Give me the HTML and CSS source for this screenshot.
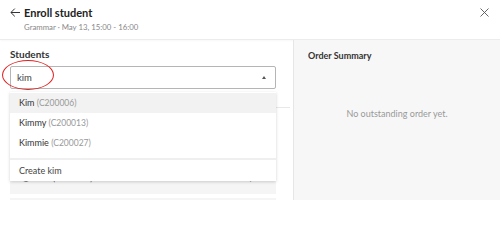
FILE: index.html
```html
<!DOCTYPE html>
<html>
<head>
<meta charset="utf-8">
<link rel="stylesheet" href="styles.css">
</head>
<body>
<div class="header">
  <svg class="back" width="10" height="9" viewBox="0 0 10 9"><path d="M10 4.5H1M4.8 0.6L0.9 4.5L4.8 8.4" fill="none" stroke="#333" stroke-width="1"/></svg>
  <div class="titles">
    <div class="title">Enroll student</div>
    <div class="subtitle">Grammar · May 13, 15:00 - 16:00</div>
  </div>
  <svg class="close" width="9" height="9" viewBox="0 0 9 9"><path d="M0.5 0.5L8.5 8.5M8.5 0.5L0.5 8.5" fill="none" stroke="#555" stroke-width="0.9"/></svg>
</div>
<div class="main">
  <div class="left">
    <div class="label">Students</div>
    <div class="field">
      <div class="input">
        <span class="value">kim</span>
        <span class="caret"></span>
      </div>
      <div class="ring"></div>
      <div class="below">
        <div class="sep"></div>
        <div class="row row1"><span class="radio"></span><span class="rowtext">Kim (C200006) · Grammar · 8 lessons · 1 term</span><span class="price">$200</span></div>
        <div class="row row2"></div>
      </div>
      <div class="menu">
        <div class="opt active">Kim <span class="code">(C200006)</span></div>
        <div class="opt">Kimmy <span class="code">(C200013)</span></div>
        <div class="opt">Kimmie <span class="code">(C200027)</span></div>
        <div class="opt create">Create kim</div>
      </div>
    </div>
  </div>
  <div class="right">
    <div class="summary">Order Summary</div>
    <div class="empty">No outstanding order yet.</div>
  </div>
</div>
</body>
</html>
```
FILE: styles.css
```css
html, body {
  margin: 0;
  padding: 0;
  width: 500px;
  height: 200px;
  overflow: hidden;
  background: #fff;
  font-family: Lato, "Noto Sans", sans-serif;
  color: #333;
}
.header {
  height: 39px;
  border-bottom: 1px solid #ececec;
  display: flex;
  align-items: flex-start;
  padding: 0 11px 0 10px;
  box-shadow: 0 1px 2px rgba(0,0,0,0.03);
}
.back {
  margin-top: 8px;
  margin-right: 4px;
}
.titles {
  flex: 1;
  padding-top: 5px;
}
.title {
  font-size: 11px;
  font-weight: 700;
  color: #222;
  line-height: 15px;
}
.subtitle {
  font-size: 7.8px;
  color: #888;
  line-height: 12px;
  margin-top: 1px;
}
.close {
  margin-top: 8px;
}
.main {
  display: flex;
  height: 160px;
}
.left {
  width: 293px;
  padding: 7px 0 0 10px;
  box-sizing: border-box;
}
.label {
  font-size: 10px;
  font-weight: 700;
  color: #333;
  line-height: 14px;
  margin-bottom: 5px;
}
.field {
  position: relative;
  width: 266px;
}
.input {
  height: 21px;
  border: 1px solid #b5b5b5;
  border-radius: 2px;
  display: flex;
  align-items: center;
  padding: 0 7px 0 6px;
  justify-content: space-between;
}
.value {
  font-size: 9.5px;
  color: #444;
}
.caret {
  width: 0;
  height: 0;
  border-left: 2.5px solid transparent;
  border-right: 2.5px solid transparent;
  border-bottom: 3px solid #555;
  margin-right: 2px;
}
.ring {
  position: absolute;
  left: -8px;
  top: -6px;
  width: 50px;
  height: 28px;
  border: 1.2px solid #e02020;
  border-radius: 50%;
}
.below {
  position: relative;
}
.sep {
  height: 1px;
  background: #e8e8e8;
  margin: 18px -14px 0 0;
}
.row {
  background: #f5f5f5;
}
.row1 {
  margin-top: 64px;
  height: 22px;
  display: flex;
  align-items: center;
  padding: 0 8px 10px 12px;
  box-sizing: border-box;
  font-size: 8.5px;
  color: #555;
}
.radio {
  width: 6px;
  height: 6px;
  border: 1px solid #777;
  border-radius: 50%;
  margin-right: 6px;
}
.rowtext {
  flex: 1;
}
.row2 {
  margin-top: 4px;
  height: 20px;
}
.menu {
  position: absolute;
  top: 26px;
  left: 0;
  width: 266px;
  background: #fff;
  box-shadow: 0 1px 3px rgba(0,0,0,0.18);
  padding-top: 1px;
}
.opt {
  height: 20px;
  line-height: 20px;
  padding-left: 9px;
  font-size: 9px;
  color: #333;
}
.opt.active {
  background: #f2f2f2;
}
.code {
  font-size: 8.5px;
  color: #999;
}
.opt.create {
  border-top: 2px solid #efefef;
  margin-top: 5px;
  height: 21px;
  line-height: 21px;
  color: #444;
}
.right {
  flex: 1;
  background: #f7f7f7;
  border-left: 1px solid #e6e6e6;
  padding: 9px 0 0 14px;
}
.summary {
  font-size: 9px;
  font-weight: 700;
  color: #333;
  line-height: 14px;
}
.empty {
  text-align: center;
  font-size: 9px;
  line-height: 12px;
  color: #999;
  margin-top: 45px;
  margin-left: -14px;
}
```
